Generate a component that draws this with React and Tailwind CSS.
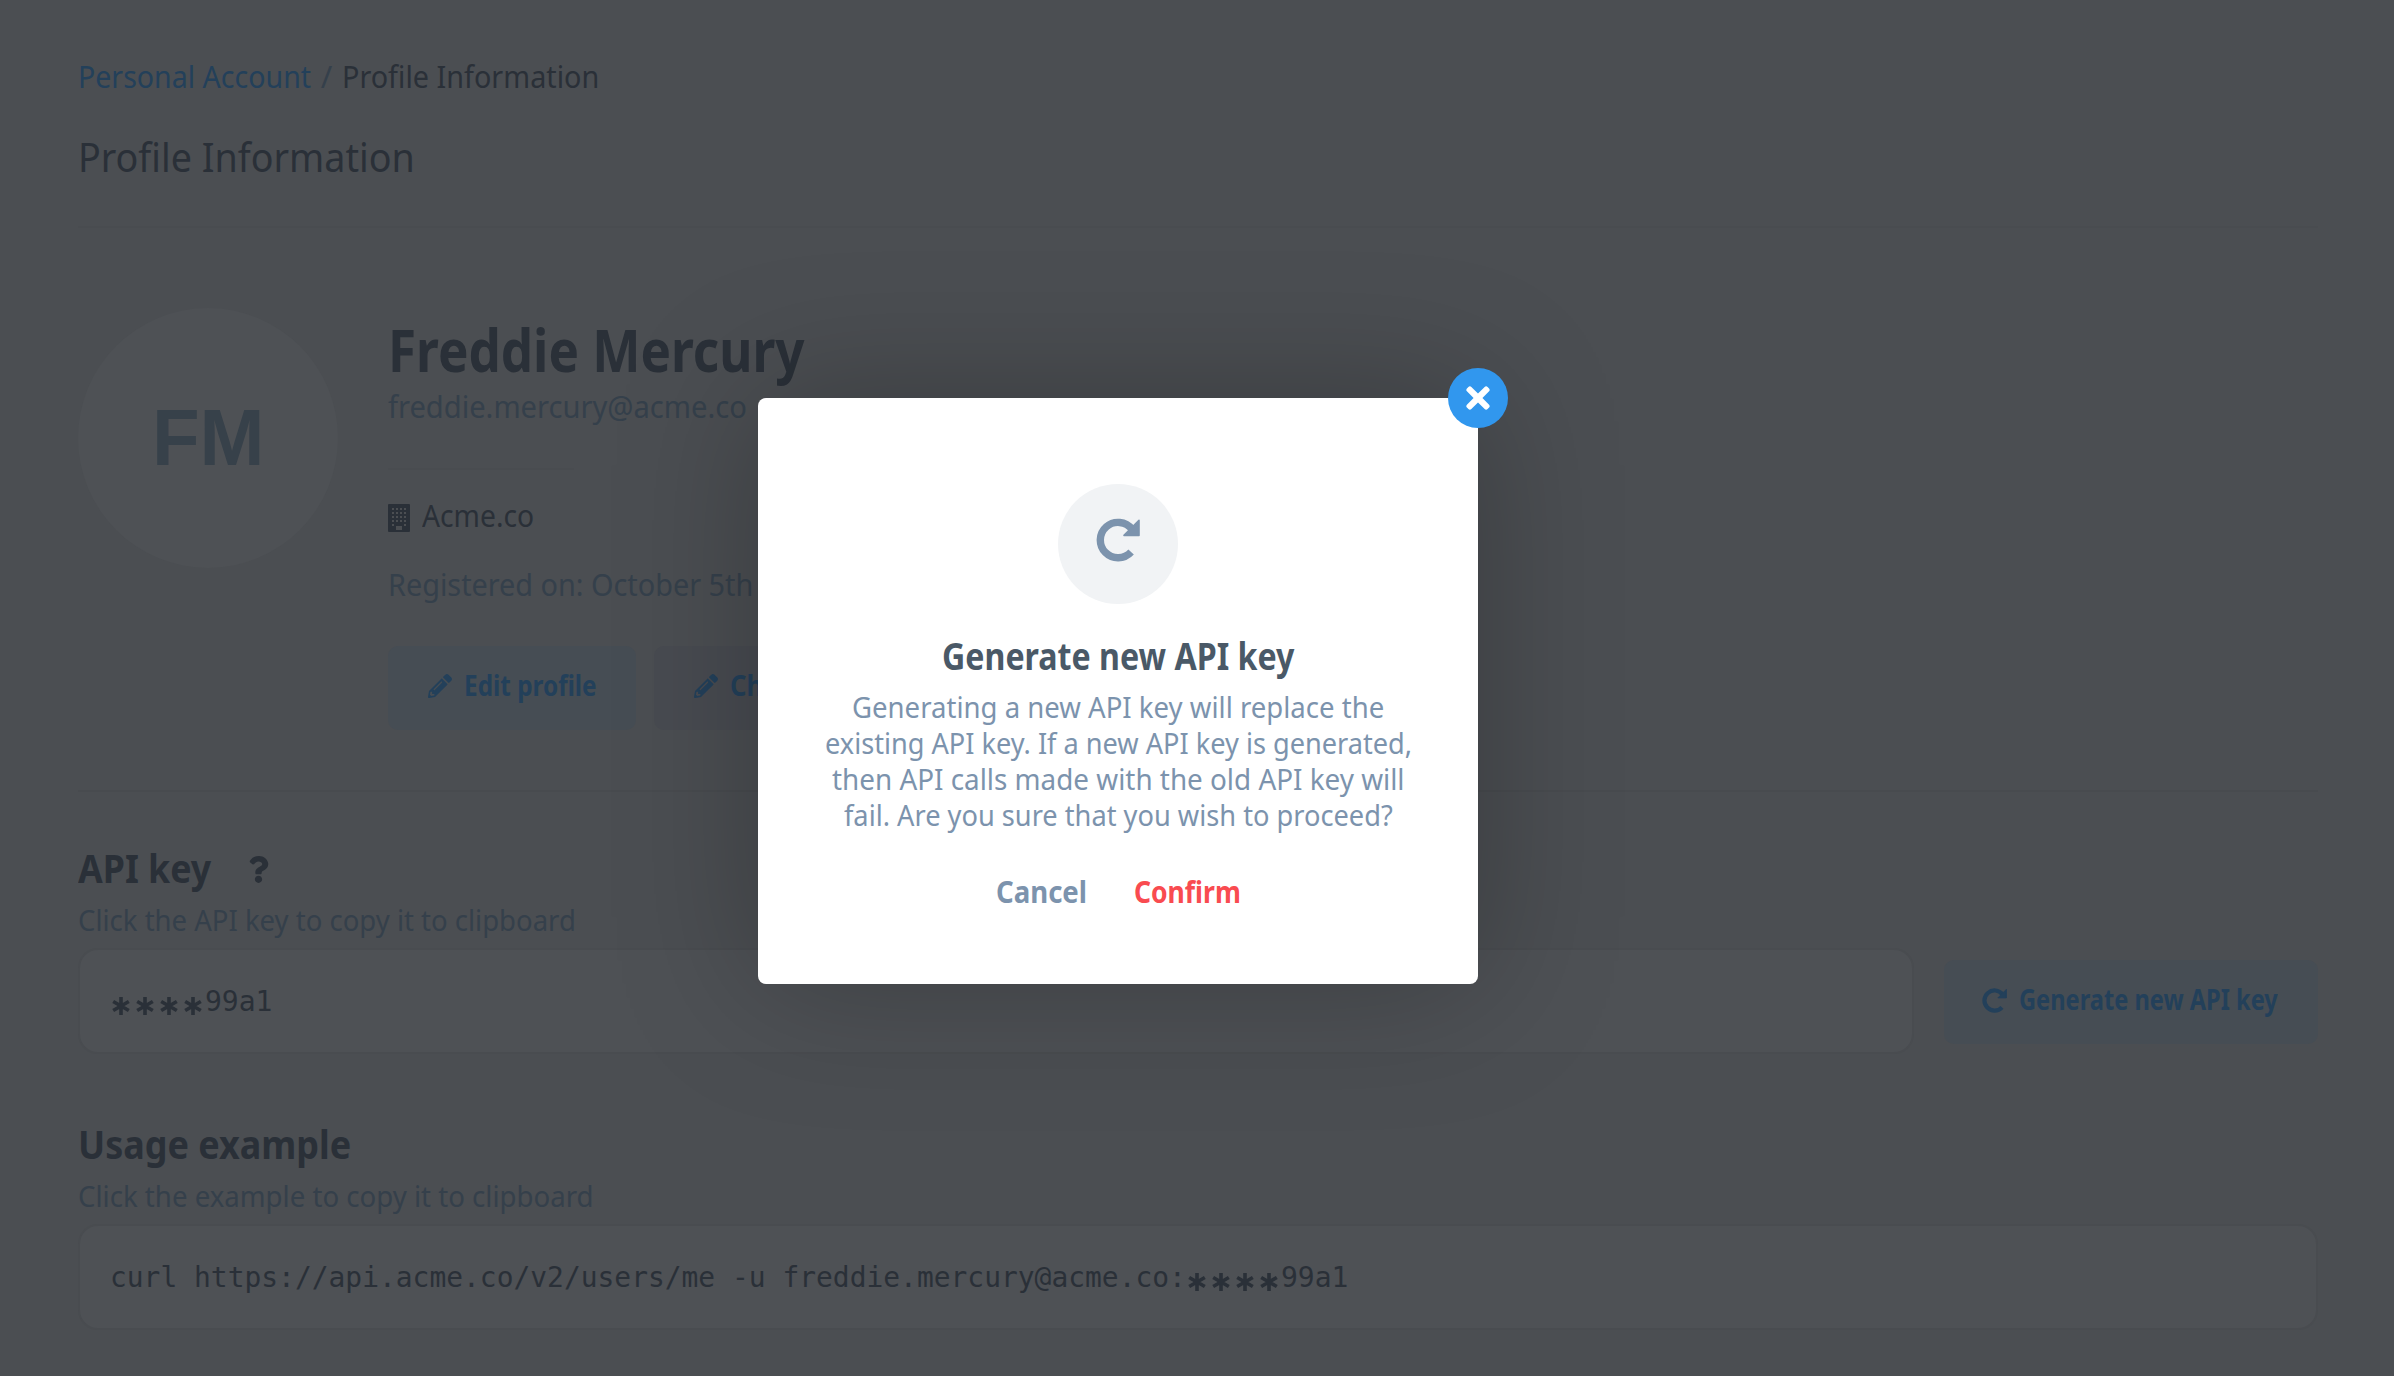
import { useLayoutEffect, useRef, useState } from "react";
import { FaPencilAlt, FaQuestion, FaTimes } from "react-icons/fa";

/* Sets one line of text condensed or expanded to the given width. */
function Fit({ w, className = "", children }) {
  const ref = useRef(null);
  const [scale, setScale] = useState(1);
  useLayoutEffect(() => {
    setScale(w / ref.current.offsetWidth);
  }, [w]);
  return (
    <span className={"block shrink-0 whitespace-nowrap " + className} style={{ width: w }}>
      <span ref={ref} className="inline-block origin-left align-top" style={{ transform: `scaleX(${scale})` }}>
        {children}
      </span>
    </span>
  );
}

function RedoIcon({ className }) {
  return (
    <svg viewBox="0 0 44 44" className={"shrink-0 " + className} fill="none" stroke="currentColor">
      <path d="M36 11.2A17.7 17.7 0 1 0 35.1 34" strokeWidth="7.4" />
      <path d="M43 2.4V17.4H28Z" fill="currentColor" strokeWidth="1.6" strokeLinejoin="round" />
    </svg>
  );
}

function BuildingIcon() {
  const cols = [4, 8, 12, 16];
  const rows = [4, 8, 12, 16];
  return (
    <svg viewBox="0 0 22 28" className="h-7 w-[22px] shrink-0">
      <rect width="22" height="28" rx="1" fill="#2a3038" />
      <g fill="#4b4e52">
        {rows.map((y) => cols.map((x) => <rect key={x + "-" + y} x={x} y={y} width="2" height="2" />))}
        <rect x="4" y="20" width="2" height="2" />
        <rect x="16" y="20" width="2" height="2" />
        <rect x="8" y="22" width="6" height="4" />
      </g>
    </svg>
  );
}

function Stars() {
  return (
    <span className="flex gap-[6px] pl-[2px] pr-[3px] pt-[8px]">
      {[0, 1, 2, 3].map((i) => (
        <svg key={i} viewBox="0 0 18 18" className="size-[18px]" stroke="#2a3038" strokeWidth="3.6">
          <path d="M9 0V18M1.2 4.5L16.8 13.5M16.8 4.5L1.2 13.5" />
        </svg>
      ))}
    </span>
  );
}

function Field({ className = "", children }) {
  return (
    <div
      className={
        "flex h-[106px] items-center rounded-[20px] border-2 border-[#494c50] bg-[#4e5155] pl-[30px] pt-px font-['DejaVu_Sans_Mono',monospace] text-[28px] leading-[36px] text-[#2a3038] " +
        className
      }
    >
      {children}
    </div>
  );
}

export default function App() {
  return (
    <div className="relative h-[1376px] w-[2394px] overflow-hidden bg-[#4b4e52] font-['Noto_Sans','Open_Sans',sans-serif] text-[#2a3038]">
      <div className="flex flex-col pl-[78px] pr-[76px] pt-14">
        <nav className="flex text-[31px] leading-10">
          <Fit w={233} className="text-[#23405a]">Personal Account</Fit>
          <span className="w-[31px] text-center text-[#35404b]">/</span>
          <Fit w={257}>Profile Information</Fit>
        </nav>
        <h1 className="mt-[37px] text-[40px] leading-[48px]">
          <Fit w={337}>Profile Information</Fit>
        </h1>

        <div className="mt-[45px] h-0.5 bg-[#494c50]" />

        <section className="mt-20 flex gap-[50px]">
          <div className="flex size-[260px] items-center justify-center rounded-full bg-[#4e5155] font-['Liberation_Sans',sans-serif] text-[80px] font-bold leading-none text-[#37414a]">
            <Fit w={113}>FM</Fit>
          </div>
          <div className="flex flex-col items-start pt-[9px]">
            <h2 className="text-[59px] font-bold leading-[64px]">
              <Fit w={417}>Freddie Mercury</Fit>
            </h2>
            <p className="mt-2 text-[30px] leading-9 text-[#35404b]">
              <Fit w={359}>freddie.mercury@acme.co</Fit>
            </p>
            <div className="mt-[43px] h-0.5 w-[186px] bg-[#494c50]" />
            <div className="mt-7 flex gap-3 text-[30px] leading-9">
              <span className="pt-1.5"><BuildingIcon /></span>
              <Fit w={112}>Acme.co</Fit>
            </div>
            <p className="mt-[33px] text-[30px] leading-9 text-[#35404b]">
              <Fit w={365}>Registered on: October 5th</Fit>
            </p>
            <div className="mt-[43px] flex gap-[18px] text-[28px] font-bold text-[#23405a]">
              <div className="flex h-[84px] w-[248px] items-center rounded-[10px] bg-[#464d54] pb-1 pl-10">
                <FaPencilAlt className="size-6" />
                <Fit w={133} className="ml-3 pb-0.5">Edit profile</Fit>
              </div>
              <div className="flex h-[84px] w-[350px] items-center rounded-[10px] bg-[#484b51] pb-1 pl-10">
                <FaPencilAlt className="size-6" />
                <Fit w={33} className="ml-3 pb-0.5">Ch</Fit>
              </div>
            </div>
          </div>
        </section>

        <div className="mt-[60px] h-0.5 bg-[#484b4f]" />

        <section className="mt-[52px]">
          <div className="flex text-[40px] font-bold leading-[48px]">
            <Fit w={133}>API key</Fit>
            <FaQuestion className="ml-[34px] mt-3 size-[27px]" />
          </div>
          <p className="mt-[10px] text-[29px] leading-9 text-[#35404b]">
            <Fit w={498}>Click the API key to copy it to clipboard</Fit>
          </p>
          <div className="mt-[10px] flex items-center gap-[30px]">
            <Field className="w-[1836px]">
              <Stars />
              <Fit w={67}>99a1</Fit>
            </Field>
            <div className="mt-0.5 flex h-[84px] flex-1 items-center rounded-[10px] bg-[#464d54] pb-1 pl-[38px] text-[28px] font-bold text-[#23405a]">
              <RedoIcon className="size-[25px]" />
              <Fit w={259} className="ml-3 pb-0.5">Generate new API key</Fit>
            </div>
          </div>
        </section>

        <section className="mt-[66px]">
          <h2 className="text-[40px] font-bold leading-[48px]">
            <Fit w={273}>Usage example</Fit>
          </h2>
          <p className="mt-[10px] text-[29px] leading-9 text-[#35404b]">
            <Fit w={516}>Click the example to copy it to clipboard</Fit>
          </p>
          <Field className="mt-[10px]">
            <Fit w={1076}>curl https://api.acme.co/v2/users/me -u freddie.mercury@acme.co:</Fit>
            <Stars />
            <Fit w={67}>99a1</Fit>
          </Field>
        </section>
      </div>

      <div className="absolute inset-0 pl-[758px] pt-[398px]">
        <div className="relative flex h-[586px] w-[720px] flex-col items-center rounded-lg bg-white pt-[86px] shadow-[0_0_140px_rgba(0,0,0,0.25)]">
          <button className="absolute -right-[30px] -top-[30px] flex size-[60px] items-center justify-center rounded-full bg-[#3197ee] text-white">
            <FaTimes className="size-[34px]" />
          </button>
          <div className="flex size-[120px] items-center justify-center rounded-full bg-[#f1f3f5] pb-2 text-[#7c93ad]">
            <RedoIcon className="size-11" />
          </div>
          <h3 className="mt-[30px] text-[37px] font-bold leading-[44px] text-[#4a5967]">
            <Fit w={352}>Generate new API key</Fit>
          </h3>
          <div className="mt-[11px] flex flex-col items-center text-[29px] leading-9 text-[#7c93ad]">
            <Fit w={532}>Generating a new API key will replace the</Fit>
            <Fit w={587}>existing API key. If a new API key is generated,</Fit>
            <Fit w={573}>then API calls made with the old API key will</Fit>
            <Fit w={549}>fail. Are you sure that you wish to proceed?</Fit>
          </div>
          <div className="mt-[41px] flex gap-[47px] text-[30px] font-bold leading-9">
            <Fit w={91} className="text-[#7c93ad]">Cancel</Fit>
            <Fit w={107} className="text-[#f94b50]">Confirm</Fit>
          </div>
        </div>
      </div>
    </div>
  );
}
